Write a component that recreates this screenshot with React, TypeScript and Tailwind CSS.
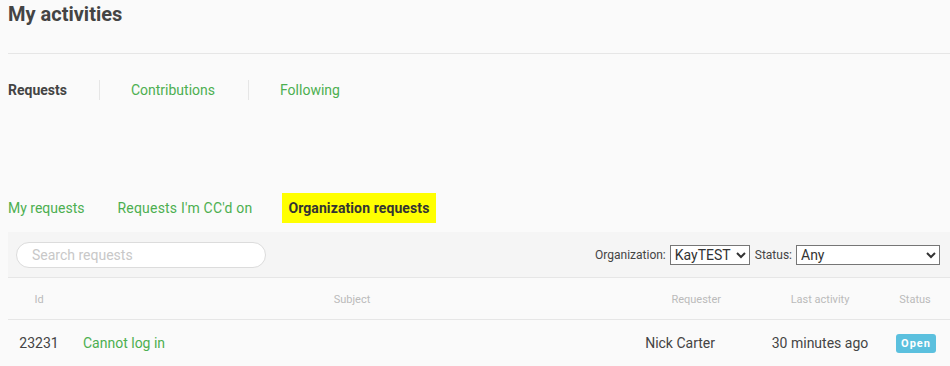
import React from "react";

const green = "text-[#4caf50]";

const App = () => {
  return (
    <div className="min-h-screen w-[950px] overflow-hidden bg-[#fafafa] pl-2 font-['Roboto',sans-serif] text-[#444]">
      <h1 className="text-[20px] leading-[28px] font-bold text-[#444]">My activities</h1>
      <hr className="mt-[25px] border-t border-[#e6e6e6]" />

      <nav className="mt-[26px] flex h-5 items-center text-[14px] leading-5">
        <span className="border-r border-[#e6e6e6] pr-8 font-bold text-[#444]">Requests</span>
        <a className={`border-r border-[#e6e6e6] pl-[31px] pr-[33px] ${green}`}>Contributions</a>
        <a className={`pl-[31px] ${green}`}>Following</a>
      </nav>

      <div className="mt-[93px] -ml-[6px] flex text-[14px] leading-[30px]">
        <a className={`px-[6px] ${green}`}>My requests</a>
        <a className={`ml-[21px] px-[6px] tracking-[0.2px] ${green}`}>Requests I'm CC'd on</a>
        <span className="ml-[24px] bg-[#ffff00] px-[6px] pr-[7px] font-bold tracking-[0.1px] text-[#333]">
          Organization requests
        </span>
      </div>

      <div className="mt-[9px] flex h-[46px] items-center justify-between border-b border-[#e6e6e6] bg-[#f5f5f5] pl-2 pr-[10px]">
        <input
          placeholder="Search requests"
          className="h-[26px] w-[250px] rounded-full border border-[#dcdcdc] bg-white px-[15px] text-[14px] text-[#444] outline-none placeholder:text-[#c8c8c8]"
        />
        <div className="flex items-center gap-1 text-[12px] text-[#444]">
          <label>Organization:</label>
          <select className="h-5 w-20 border border-[#767676] bg-white text-[14px] text-[#333]" defaultValue="KayTEST">
            <option>KayTEST</option>
          </select>
          <label className="ml-[1px]">Status:</label>
          <select className="h-5 w-[144px] border border-[#767676] bg-white text-[14px] text-[#333]" defaultValue="Any">
            <option>Any</option>
          </select>
        </div>
      </div>

      <div className="grid h-[42px] grid-cols-[62px_564px_126px_120px_70px] items-center border-b border-[#e6e6e6] pt-[3px] text-[11px] text-[#bbb]">
        <div className="text-center">Id</div>
        <div className="text-center">Subject</div>
        <div className="pr-[39px] text-right">Requester</div>
        <div className="text-center">Last activity</div>
        <div className="text-center">Status</div>
      </div>

      <div className="grid h-[46px] grid-cols-[62px_564px_126px_120px_70px] items-center text-[14px] text-[#444]">
        <div className="text-center">23231</div>
        <div className="pl-[13px]">
          <a className={green}>Cannot log in</a>
        </div>
        <div className="pr-[45px] text-right">Nick Carter</div>
        <div className="text-center">30 minutes ago</div>
        <div className="flex justify-center pl-[2px]">
          <span className="rounded-[3px] bg-[#5bc0de] px-[5px] text-[11px] leading-[19px] font-bold tracking-[1px] text-white">
            Open
          </span>
        </div>
      </div>
    </div>
  );
};

export default App;
